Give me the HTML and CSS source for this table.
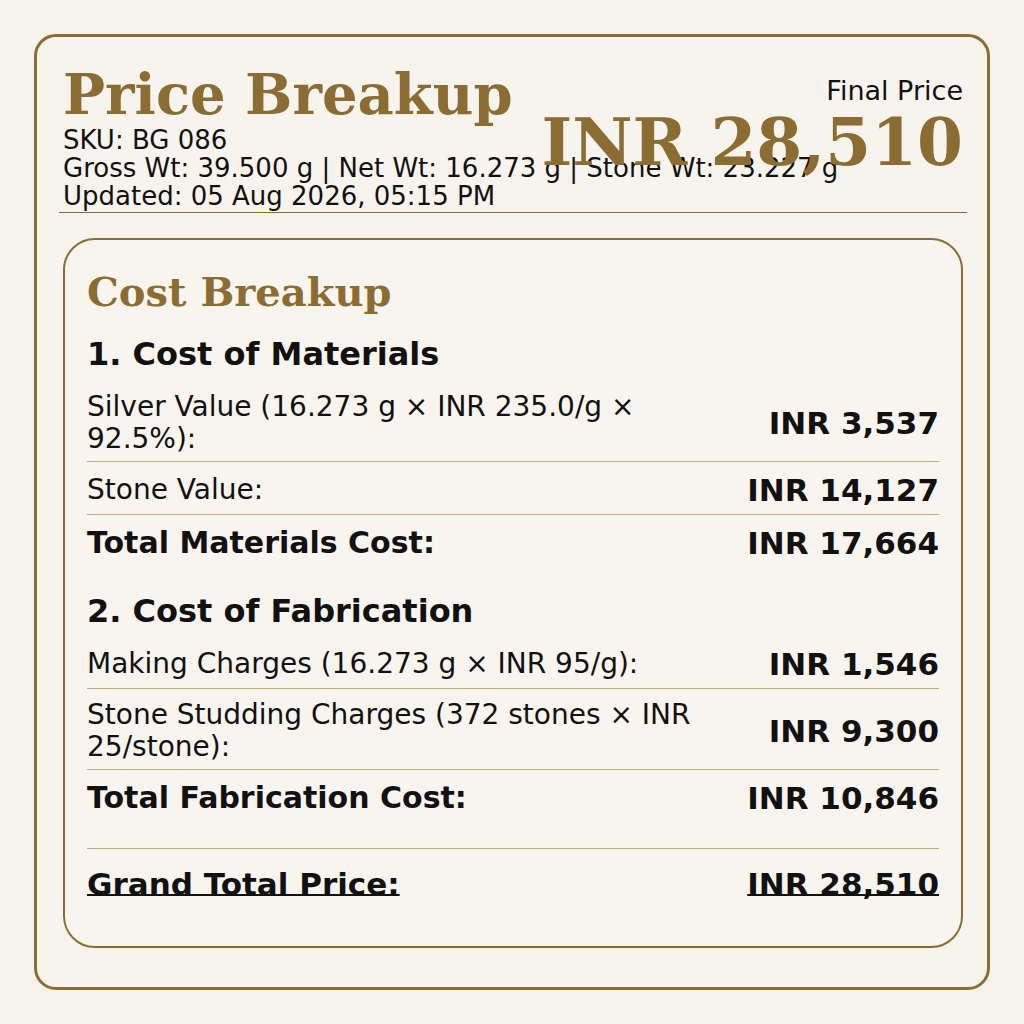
FILE: index.html
```html
<!DOCTYPE html>
<html lang="en">
<head>
<meta charset="utf-8">
<title>Price Breakup</title>
<link rel="stylesheet" href="styles.css">
</head>
<body>
<div class="page">
  <div class="card">
    <header class="head">
      <div class="head-left">
        <h1 class="title">Price Breakup</h1>
        <div class="meta">SKU: BG 086</div>
        <div class="meta">Gross Wt: 39.500 g | Net Wt: 16.273 g | Stone Wt: 23.227 g</div>
        <div class="meta">Updated: 05 Aug 2026, 05:15 PM</div>
      </div>
      <div class="head-right">
        <div class="final-label">Final Price</div>
        <div class="final-amount">INR 28,510</div>
      </div>
    </header>

    <section class="breakup">
      <h2 class="breakup-title">Cost Breakup</h2>

      <h3 class="section-title">1. Cost of Materials</h3>
      <div class="row">
        <div class="label">Silver Value (16.273 g × INR 235.0/g × 92.5%):</div>
        <div class="value">INR 3,537</div>
      </div>
      <div class="row">
        <div class="label">Stone Value:</div>
        <div class="value">INR 14,127</div>
      </div>
      <div class="row total">
        <div class="label">Total Materials Cost:</div>
        <div class="value">INR 17,664</div>
      </div>

      <h3 class="section-title">2. Cost of Fabrication</h3>
      <div class="row">
        <div class="label">Making Charges (16.273 g × INR 95/g):</div>
        <div class="value">INR 1,546</div>
      </div>
      <div class="row">
        <div class="label">Stone Studding Charges (372 stones × INR 25/stone):</div>
        <div class="value">INR 9,300</div>
      </div>
      <div class="row total">
        <div class="label">Total Fabrication Cost:</div>
        <div class="value">INR 10,846</div>
      </div>

      <div class="row grand">
        <div class="label">Grand Total Price:</div>
        <div class="value">INR 28,510</div>
      </div>
    </section>
  </div>
</div>
</body>
</html>
```

FILE: styles.css
```css
* { box-sizing: border-box; }

html, body {
  margin: 0;
  padding: 0;
  background: #f6f3ed;
}

body {
  font-family: "DejaVu Sans", "Liberation Sans", sans-serif;
  color: #111111;
}

.page {
  padding: 34px;
}

.card {
  width: 956px;
  height: 956px;
  border: 3px solid #8b6d33;
  border-radius: 22px;
  background: #f7f4ee;
  padding: 25px 24px 25px 26px;
}

.head {
  display: flex;
  justify-content: space-between;
  align-items: flex-start;
  margin: 0 -4px;
  padding: 0 4px 2px;
  border-bottom: 1px solid #8b6d33;
}

.head-left {
  flex: 1 1 0;
  min-width: 0;
  white-space: nowrap;
}

.title {
  margin: 0;
  font-family: "DejaVu Serif", "Liberation Serif", serif;
  font-weight: bold;
  font-size: 56px;
  line-height: 64px;
  color: #8b6d33;
}

.meta {
  font-size: 26px;
  line-height: 28px;
}

.head-right {
  flex: none;
  margin-top: 13px;
  text-align: right;
  white-space: nowrap;
}

.final-label {
  font-size: 27px;
  line-height: 31px;
}

.final-amount {
  font-family: "DejaVu Serif", "Liberation Serif", serif;
  font-weight: bold;
  font-size: 66px;
  line-height: 72px;
  color: #8b6d33;
}

.breakup {
  margin-top: 25px;
  border: 2px solid #8b6d33;
  border-radius: 32px;
  background: #f8f5ef;
  padding: 29px 22px 36px 22px;
}

.breakup-title {
  margin: 0;
  font-family: "DejaVu Serif", "Liberation Serif", serif;
  font-weight: bold;
  font-size: 40px;
  line-height: 46px;
  color: #8b6d33;
}

.section-title {
  margin: 20px 0 8px;
  font-size: 32px;
  font-weight: bold;
  line-height: 38px;
}

.row + .section-title {
  margin-top: 25px;
  margin-bottom: 6px;
}

.row {
  display: flex;
  justify-content: space-between;
  align-items: center;
  gap: 24px;
  padding: 10px 0 6px;
  border-bottom: 1px solid #c6ad78;
}

.row.total {
  border-bottom: none;
}

.label {
  flex: 1 1 auto;
  font-size: 28px;
  line-height: 32px;
}

.value {
  flex: none;
  white-space: nowrap;
  font-size: 31px;
  font-weight: bold;
  line-height: 36px;
  text-align: right;
}

.total .label {
  font-size: 30px;
  font-weight: bold;
  line-height: 36px;
}

.grand {
  margin-top: 26px;
  padding: 17px 0 8px;
  border-top: 1px solid #c6ad78;
  border-bottom: none;
}

.grand .label,
.grand .value {
  font-size: 31px;
  font-weight: bold;
  line-height: 36px;
  text-decoration: underline;
  text-decoration-thickness: 2px;
  text-underline-offset: -1px;
  text-decoration-skip-ink: none;
}
```
